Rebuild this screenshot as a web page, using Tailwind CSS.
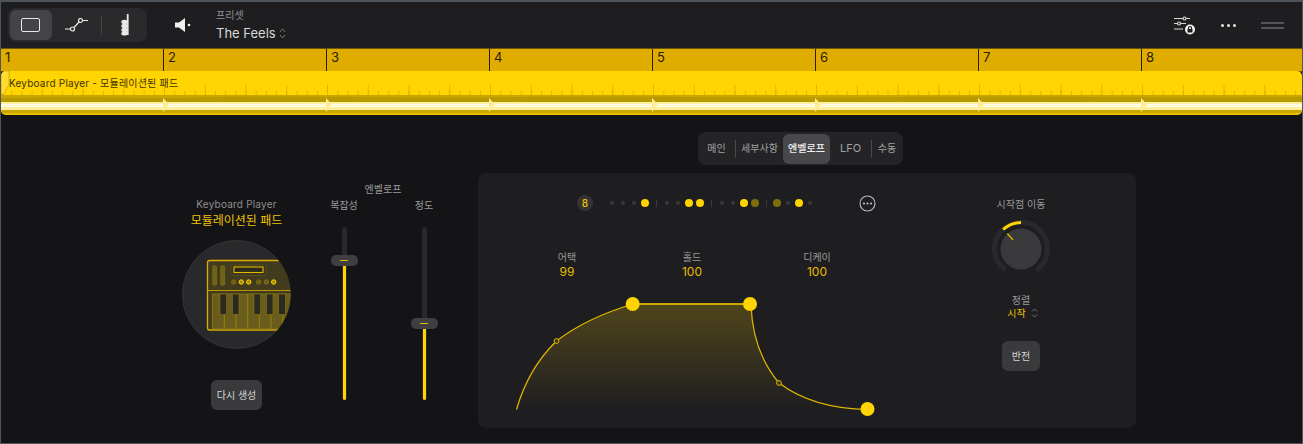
<!doctype html>
<html lang="ko">
<head>
<meta charset="utf-8">
<script src="https://cdn.jsdelivr.net/npm/@tailwindcss/browser@4"></script>
</head>
<body class="m-0 bg-[#141416]">
<div class="w-[1303px] h-[444px] overflow-hidden flex flex-col bg-[#141416] border-t-2 border-l border-r border-b border-[#4f545a] font-['Inter','Noto_Sans_CJK_KR',sans-serif] box-border">

  <!-- toolbar -->
  <header class="h-[46px] shrink-0 flex items-center bg-[#1e1e20] pl-[7px] pr-[18px]">
    <div class="w-[139px] h-[34px] rounded-lg bg-[#2a2a2c] flex items-center pl-[2px]">
      <div class="w-[42px] h-[30px] rounded-md bg-[#444448] flex items-center justify-center">
        <div class="w-[19px] h-[14px] rounded-[2px] border border-[#e8e8e8]"></div>
      </div>
      <div class="w-[50px] flex justify-center">
        <svg width="24" height="14" viewBox="0 0 24 14" fill="none" stroke="#e8e8e8" stroke-width="1.2"><path d="M0 11H5.5M9 9.5 14 4M17 2.5H23"/><circle cx="7.5" cy="11" r="2"/><circle cx="15.500" cy="2.500" r="2"/></svg>
      </div>
      <div class="w-px h-[19px] bg-[#444]"></div>
      <div class="w-[45px] flex justify-center">
        <svg width="8" height="22" viewBox="0 0 8 22" fill="#e8e8e8"><rect x="5.800" y="0" width="1.800" height="21"/><ellipse cx="3.500" cy="8" rx="3.200" ry="2.200"/><ellipse cx="3.500" cy="12" rx="3.200" ry="2.200"/><ellipse cx="3.500" cy="16" rx="3.200" ry="2.200"/><ellipse cx="3.500" cy="19.500" rx="3.200" ry="2"/></svg>
      </div>
    </div>
    <svg class="ml-[28px]" width="16" height="14" viewBox="0 0 16 14" fill="#f0f0f0"><path d="M0 4.500H4L10 0V14L4 9.500H0Z"/><circle cx="14" cy="7" r="1.300"/></svg>
    <div class="ml-[25px] flex flex-col">
      <span class="text-[10px] leading-[12px] text-[#8e8e90]">프리셋</span>
      <div class="mt-[4px] flex items-center gap-[3px]">
        <span class="text-[13px] leading-[16px] text-[#d8d8d8]">The Feels</span>
        <svg width="7" height="11" viewBox="0 0 7 11" fill="none" stroke="#77777a" stroke-width="1"><path d="M1 4 3.500 1 6 4M1 7 3.500 10 6 7"/></svg>
      </div>
    </div>
    <div class="ml-auto flex items-center">
      <svg width="22" height="20" viewBox="0 0 22 20" fill="none" stroke="#d6d6d6" stroke-width="1.200"><path d="M0 3.500H16M0 8.500H12M0 14H9"/><circle cx="10.500" cy="3.500" r="1.500" fill="#1e1e20"/><circle cx="5" cy="8.500" r="1.500" fill="#1e1e20"/><circle cx="16" cy="14.500" r="5" fill="#f4f4f4" stroke="none"/><rect x="13.500" y="14" width="5" height="3.500" fill="#1e1e20" stroke="none"/><path d="M14.500 14V13a1.500 1.500 0 0 1 3 0V14" stroke="#1e1e20"/></svg>
      <div class="ml-[25px] flex gap-[3px]"><i class="block w-[3px] h-[3px] rounded-full bg-[#e4e4e4]"></i><i class="block w-[3px] h-[3px] rounded-full bg-[#e4e4e4]"></i><i class="block w-[3px] h-[3px] rounded-full bg-[#e4e4e4]"></i></div>
      <div class="ml-[25px] w-[23px] flex flex-col gap-[3px]"><i class="block h-[2px] bg-[#555558]"></i><i class="block h-[2px] bg-[#555558]"></i></div>
    </div>
  </header>

  <!-- bar ruler -->
  <div class="h-[24px] shrink-0 grid grid-cols-[162px_163px_163px_163px_163px_163px_163px_1fr] bg-[#e0ac00] border-t border-[#6b5600] border-b border-b-[#5e4c00] text-[13px] leading-[16px] text-[#2a2100] -mb-px">
    <div class="pl-[4px]">1</div>
    <div class="pl-[4px] border-l border-[#2a2100]">2</div>
    <div class="pl-[4px] border-l border-[#2a2100]">3</div>
    <div class="pl-[4px] border-l border-[#2a2100]">4</div>
    <div class="pl-[4px] border-l border-[#2a2100]">5</div>
    <div class="pl-[4px] border-l border-[#2a2100]">6</div>
    <div class="pl-[4px] border-l border-[#2a2100]">7</div>
    <div class="pl-[4px] border-l border-[#2a2100]">8</div>
  </div>

  <!-- region -->
  <div class="relative h-[44px] shrink-0 rounded-[5px] overflow-hidden bg-[#ffd400]">
    <svg class="absolute inset-0" width="1301" height="44" viewBox="0 0 1301 44">
      <defs>
        <pattern id="small" width="10.19" height="44" patternUnits="userSpaceOnUse"><rect x="0" y="20" width="1" height="4" fill="#dcb600"/></pattern>
        <pattern id="big" width="40.75" height="44" patternUnits="userSpaceOnUse"><rect x="0" y="14" width="1" height="10" fill="#dcb600"/></pattern>
      </defs>
      <rect width="1301" height="24" fill="url(#small)"/>
      <rect width="1301" height="24" fill="url(#big)"/>
      <rect y="24" width="1301" height="18" fill="#c9a600"/>
      <rect y="42" width="1301" height="2" fill="#e8c000"/>
      <path d="M0 27C100 25 140 28 220 26S400 28 520 26 760 28 900 26 1150 28 1301 26V31H0Z" fill="#b89900"/>
      <rect y="31" width="1301" height="8" fill="#ffefa0"/>
      <rect y="33" width="1301" height="3" fill="#fffbe0"/>
      <path d="M162 27 168 33.500 162 41ZM325 27 331 33.500 325 41ZM488 27 494 33.500 488 41ZM651 27 657 33.500 651 41ZM814 27 820 33.500 814 41ZM977 27 983 33.500 977 41ZM1140 27 1146 33.500 1140 41Z" fill="#ffec99"/>
      <path d="M8 0H2Q0 2 0 5V22L2 24 8 14Z" fill="#ffdc2e" stroke="#c9a600" stroke-width="0.800"/>
    </svg>
    <span class="absolute left-[8px] top-[5px] text-[10px] leading-[14px] tracking-[0.2px] text-[#3f3300]">Keyboard Player - 모듈레이션된 패드</span>
  </div>

  <!-- main -->
  <main class="flex-1 flex flex-col">
    <nav class="ml-[697px] mt-[17px] w-[205px] h-[33px] rounded-lg bg-[#242426] flex items-center text-[10px] text-[#a2a2a4]">
      <span class="w-[37px] text-center">메인</span>
      <i class="block w-px h-[18px] bg-[#4a4a4c]"></i>
      <span class="w-[47px] text-center">세부사항</span>
      <span class="w-[47px] h-[30px] rounded-md bg-[#48484a] flex items-center justify-center text-[#f2f2f2] font-medium">엔벨로프</span>
      <span class="w-[41px] text-center text-[11px]">LFO</span>
      <i class="block w-px h-[18px] bg-[#4a4a4c]"></i>
      <span class="w-[30px] text-center">수동</span>
    </nav>

    <div class="mt-[8px] flex">
      <!-- patch column -->
      <section class="w-[317px] pt-[24px] pl-[181px] flex flex-col">
        <div class="w-[109px] flex flex-col items-center whitespace-nowrap">
          <span class="text-[10px] leading-[14px] tracking-[0.2px] text-[#8e8e90]">Keyboard Player</span>
          <span class="mt-[2px] text-[12px] leading-[16px] text-[#f2c200]">모듈레이션된 패드</span>
        </div>
        <svg class="mt-[11px]" width="109" height="109" viewBox="0 0 109 109">
          <defs><clipPath id="c"><circle cx="54.500" cy="54.500" r="54"/></clipPath></defs>
          <circle cx="54.500" cy="54.500" r="54" fill="#29292b" stroke="#343436"/>
          <g clip-path="url(#c)">
            <rect x="25.500" y="20.500" width="100" height="69.500" rx="2" fill="#423b1e" stroke="#d9b000" stroke-width="1.300"/>
            <path d="M25.500 50.500H126" stroke="#b89700" stroke-width="1.200"/>
            <rect x="30.700" y="25.700" width="4" height="19.500" rx="1" fill="#6f601a" stroke="#8a7710" stroke-width="0.600"/>
            <rect x="38.700" y="25.700" width="4" height="19.500" rx="1" fill="#6f601a" stroke="#8a7710" stroke-width="0.600"/>
            <rect x="49" y="25" width="35" height="10.500" rx="1.500" fill="#3a3520" stroke="#5c5220" stroke-width="0.800"/>
            <rect x="52" y="27" width="29" height="5.500" fill="#2c2a1d" stroke="#e3b900" stroke-width="1.100"/>
            <g fill="#6a5c16" stroke="#8a7710" stroke-width="0.800"><circle cx="51.700" cy="42" r="2.200"/><circle cx="76.700" cy="42" r="2.200"/><circle cx="84.300" cy="42" r="2.200"/></g>
            <g fill="#a88c00" stroke="#ffd400" stroke-width="1"><circle cx="59.300" cy="42" r="2.200"/><circle cx="66.700" cy="42" r="2.200"/><circle cx="91.700" cy="42" r="2.200"/></g>
            <rect x="30.300" y="54" width="90" height="35" fill="#6a5d1c" stroke="#8d7a12" stroke-width="0.800"/>
            <path d="M42.300 54V89M54 54V89M65.700 54V89M77.300 54V89M89 54V89M100.700 54V89" stroke="#a08a10" stroke-width="0.800"/>
            <g fill="#2b2a22" stroke="#8d7a12" stroke-width="0.600"><rect x="38" y="54" width="6.700" height="20.500"/><rect x="50.300" y="54" width="6.700" height="20.500"/><rect x="72" y="54" width="6.700" height="20.500"/><rect x="84.300" y="54" width="6.700" height="20.500"/><rect x="96.700" y="54" width="6.700" height="20.500"/></g>
          </g>
        </svg>
        <button class="mt-[31px] ml-[29px] w-[51px] h-[30px] rounded-md bg-[#3a3a3c] text-[10px] text-[#d6d6d8]">다시 생성</button>
      </section>

      <!-- sliders -->
      <section class="w-[160px] pt-[9px] flex flex-col text-[10px] text-[#9a9a9c]">
        <div class="w-[130px] text-center leading-[14px]">엔벨로프</div>
        <div class="mt-[2px] flex">
          <div class="w-[80px] -ml-[14px] flex flex-col items-center">
            <span class="leading-[14px]">복잡성</span>
            <div class="relative mt-[15px] w-[5px] h-[173px] rounded-full bg-[#29292b]">
              <div class="absolute left-[1px] bottom-0 w-[3px] h-[134px] bg-[#ffd400] rounded-b-full"></div>
              <div class="absolute -left-[11px] top-[28px] w-[27px] h-[11px] rounded-[5px] bg-[#3f3f41] flex items-center justify-center"><i class="block w-[8px] h-px bg-[#e5b900]"></i></div>
            </div>
          </div>
          <div class="w-[80px] flex flex-col items-center">
            <span class="leading-[14px]">정도</span>
            <div class="relative mt-[15px] w-[5px] h-[173px] rounded-full bg-[#29292b]">
              <div class="absolute left-[1px] bottom-0 w-[3px] h-[71px] bg-[#ffd400] rounded-b-full"></div>
              <div class="absolute -left-[11px] top-[91px] w-[27px] h-[11px] rounded-[5px] bg-[#3f3f41] flex items-center justify-center"><i class="block w-[8px] h-px bg-[#e5b900]"></i></div>
            </div>
          </div>
        </div>
      </section>

      <!-- envelope panel -->
      <section class="relative w-[658px] h-[255px] rounded-lg bg-[#1e1e20] flex">
        <div class="w-[455px] flex flex-col">
          <!-- step row -->
          <div class="mt-[22px] h-[16px] flex items-center">
            <span class="ml-[99px] w-[16px] h-[16px] rounded-full bg-[#333335] text-[10px] font-medium text-[#f2c200] flex items-center justify-center">8</span>
            <div class="ml-[15px] flex items-center gap-[3px]">
              <i class="block w-[8px] flex justify-center"><b class="block w-[4px] h-[4px] rounded-full bg-[#39393b]"></b></i>
              <i class="block w-[8px] flex justify-center"><b class="block w-[4px] h-[4px] rounded-full bg-[#39393b]"></b></i>
              <i class="block w-[8px] flex justify-center"><b class="block w-[4px] h-[4px] rounded-full bg-[#39393b]"></b></i>
              <i class="block w-[8px] h-[8px] rounded-full bg-[#ffd400]"></i>
              <i class="block w-[8px] flex justify-center"><b class="block w-px h-[7px] bg-[#3a3a3c]"></b></i>
              <i class="block w-[8px] flex justify-center"><b class="block w-[4px] h-[4px] rounded-full bg-[#39393b]"></b></i>
              <i class="block w-[8px] flex justify-center"><b class="block w-[4px] h-[4px] rounded-full bg-[#39393b]"></b></i>
              <i class="block w-[8px] h-[8px] rounded-full bg-[#ffd400]"></i>
              <i class="block w-[8px] h-[8px] rounded-full bg-[#ffd400]"></i>
              <i class="block w-[8px] flex justify-center"><b class="block w-px h-[7px] bg-[#3a3a3c]"></b></i>
              <i class="block w-[8px] flex justify-center"><b class="block w-[4px] h-[4px] rounded-full bg-[#39393b]"></b></i>
              <i class="block w-[8px] flex justify-center"><b class="block w-[4px] h-[4px] rounded-full bg-[#39393b]"></b></i>
              <i class="block w-[8px] h-[8px] rounded-full bg-[#ffd400]"></i>
              <i class="block w-[8px] h-[8px] rounded-full bg-[#7f6c0a]"></i>
              <i class="block w-[8px] flex justify-center"><b class="block w-px h-[7px] bg-[#3a3a3c]"></b></i>
              <i class="block w-[8px] h-[8px] rounded-full bg-[#7f6c0a]"></i>
              <i class="block w-[8px] flex justify-center"><b class="block w-[4px] h-[4px] rounded-full bg-[#39393b]"></b></i>
              <i class="block w-[8px] h-[8px] rounded-full bg-[#ffd400]"></i>
              <i class="block w-[8px] flex justify-center"><b class="block w-[4px] h-[4px] rounded-full bg-[#39393b]"></b></i>
            </div>
            <svg class="ml-[45px]" width="17" height="17" viewBox="0 0 17 17" fill="none"><circle cx="8.500" cy="8.500" r="7.500" stroke="#bdbdbf" stroke-width="1.100"/><g fill="#d0d0d2"><circle cx="5" cy="8.500" r="1"/><circle cx="8.500" cy="8.500" r="1"/><circle cx="12" cy="8.500" r="1"/></g></svg>
          </div>
          <!-- values -->
          <div class="mt-[39px] ml-[64px] flex text-center">
            <div class="w-[50px] flex flex-col"><span class="text-[10px] leading-[14px] text-[#9a9a9c]">어택</span><span class="text-[12px] leading-[16px] text-[#e8bc00]">99</span></div>
            <div class="ml-[75px] w-[50px] flex flex-col"><span class="text-[10px] leading-[14px] text-[#9a9a9c]">홀드</span><span class="text-[12px] leading-[16px] text-[#e8bc00]">100</span></div>
            <div class="ml-[75px] w-[50px] flex flex-col"><span class="text-[10px] leading-[14px] text-[#9a9a9c]">디케이</span><span class="text-[12px] leading-[16px] text-[#e8bc00]">100</span></div>
          </div>
        </div>

        <!-- envelope curve, drawn over the panel -->
        <svg class="absolute left-[30px] top-[115px]" width="380" height="130" viewBox="0 0 380 130" fill="none">
          <defs><linearGradient id="g" x1="0" y1="0" x2="0" y2="1"><stop offset="0" stop-color="#4f451c"/><stop offset="1" stop-color="#1e1e20"/></linearGradient></defs>
          <path d="M8.500 121.500C17 92 31 70 48.500 53 68 38 95 25 125 16H243C244 50 255 76 271 95 295 113 325 121 360 121.500Z" fill="url(#g)"/>
          <path d="M8.500 121.500C17 92 31 70 48.500 53 68 38 95 25 125 16H243C244 50 255 76 271 95 295 113 325 121 360 121.500" stroke="#e4b900" stroke-width="1.200"/>
          <path d="M125 16H243" stroke="#e4b900" stroke-width="1.600"/>
          <circle cx="48.500" cy="53" r="2.400" fill="#3b3518" stroke="#e4b900" stroke-width="1"/>
          <circle cx="271" cy="95" r="2.400" fill="#3b3518" stroke="#e4b900" stroke-width="1"/>
          <g fill="#ffd400"><circle cx="124.700" cy="16" r="7"/><circle cx="242" cy="16" r="7"/><circle cx="359.500" cy="121" r="7"/></g>
        </svg>

        <!-- right controls -->
        <div class="ml-[43px] w-[90px] pt-[24px] flex flex-col items-center text-[10px]">
          <span class="leading-[14px] text-[#9a9a9c]">시작점 이동</span>
          <svg class="mt-[8px]" width="60" height="60" viewBox="0 0 60 60" fill="none">
            <path d="M13 50A26.500 26.500 0 1 1 47 50" stroke="#29292b" stroke-width="5" stroke-linecap="round"/>
            <path d="M12.200 10.500A26.500 26.500 0 0 1 30 3.500" stroke="#ffd400" stroke-width="3"/>
            <circle cx="30" cy="30" r="20.500" fill="#3a3a3c"/>
            <path d="M16.300 14.500 22 21" stroke="#e8bc00" stroke-width="1.200"/>
          </svg>
          <span class="mt-[14px] leading-[14px] text-[#9a9a9c]">정렬</span>
          <div class="-mt-px flex items-center gap-[5px] pl-[3px]">
            <span class="leading-[14px] text-[#e8bc00]">시작</span>
            <svg width="7" height="10" viewBox="0 0 7 10" fill="none" stroke="#77777a"><path d="M1 3.500 3.500 1 6 3.500M1 6.500 3.500 9 6 6.500"/></svg>
          </div>
          <button class="mt-[21px] w-[38px] h-[30px] rounded-md bg-[#3a3a3c] text-[10px] text-[#d6d6d8]">반전</button>
        </div>
      </section>
    </div>
  </main>
</div>
</body>
</html>
